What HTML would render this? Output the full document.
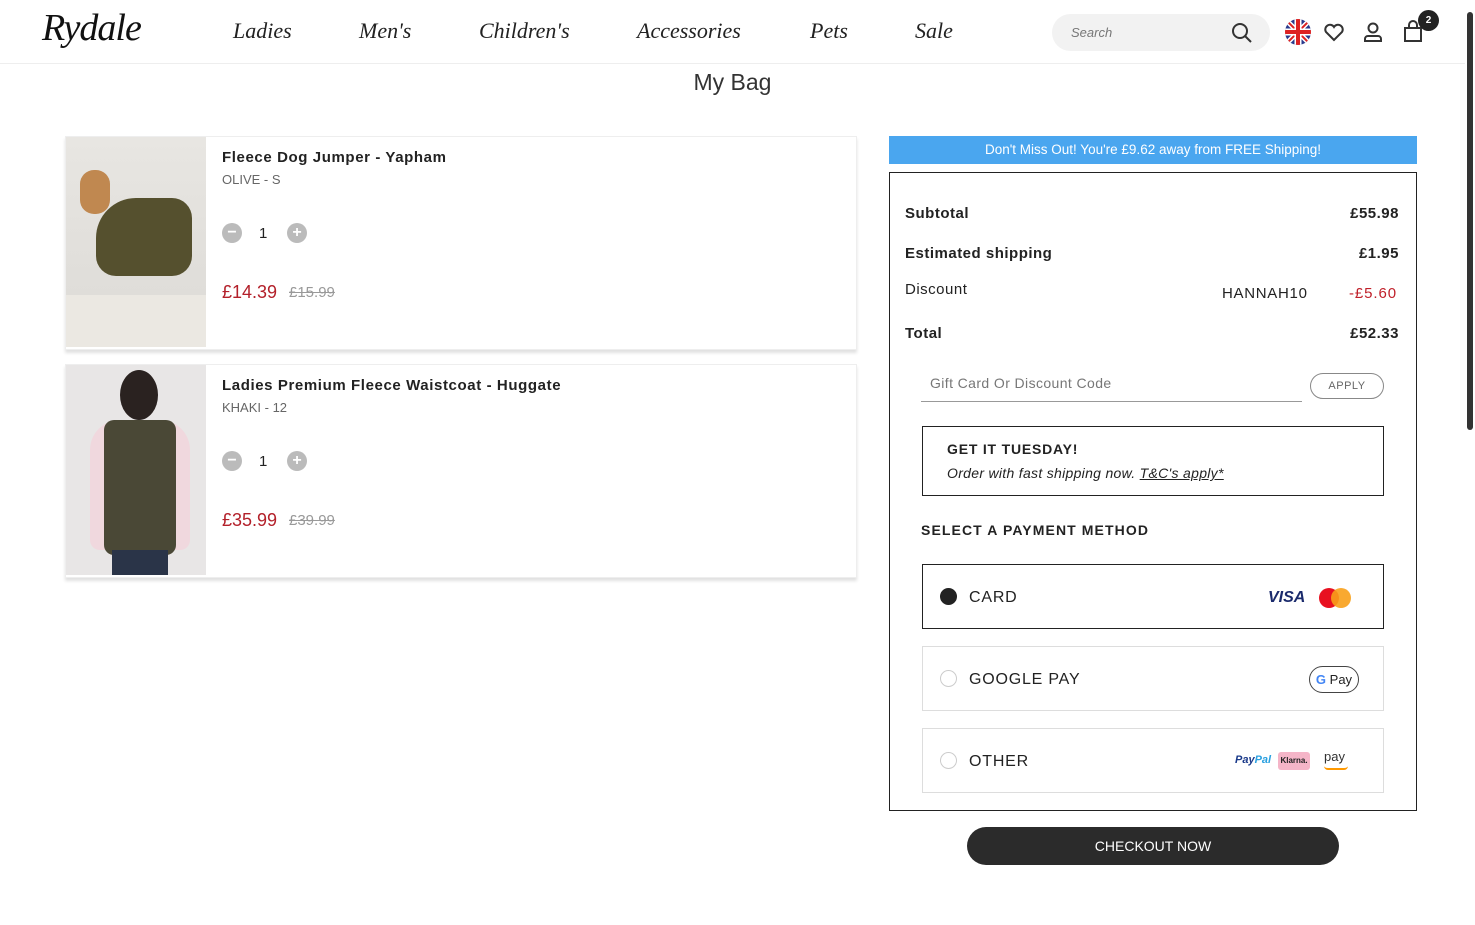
<!DOCTYPE html>
<html><head><meta charset="utf-8"><style>
*{box-sizing:border-box;margin:0;padding:0}
body{width:1475px;height:925px;overflow:hidden;background:#fff;font-family:"Liberation Sans",sans-serif;color:#222;position:relative}
.a{position:absolute}
.hdr{left:0;top:0;width:1465px;height:64px;border-bottom:1px solid #eee}
.nav{font-family:"Liberation Serif",serif;font-style:italic;font-size:22px;color:#222;top:18px}
.card{left:65px;width:792px;height:214px;border:1px solid #eee;box-shadow:0 3px 3px rgba(0,0,0,.12)}
.ttl{font-size:15px;font-weight:bold;letter-spacing:.6px;color:#222}
.sub{font-size:13px;color:#666}
.qb{width:20px;height:20px;border-radius:50%;background:#bbb;color:#fff;text-align:center;line-height:19px;font-size:16px;font-weight:bold}
.pr{font-size:18px;color:#b3202a}
.old{font-size:15px;color:#999;text-decoration:line-through}
.row{left:905px;width:494px;font-size:15px;letter-spacing:.5px}
.pay{left:922px;width:462px;height:65px;border:1px solid #ddd}
.pay span{position:absolute;left:46px;top:24px;font-size:16px;letter-spacing:.8px}
.rad{position:absolute;left:17px;top:23px;width:17px;height:17px;border-radius:50%;border:1px solid #ccc}
</style></head><body>
<div class="a hdr"></div>
<div class="a" style="left:42px;top:6px;font-family:'Liberation Serif',serif;font-style:italic;font-size:38px;letter-spacing:-1px;color:#111">Rydale</div>
<div class="a nav" style="left:233px">Ladies</div>
<div class="a nav" style="left:359px">Men's</div>
<div class="a nav" style="left:479px">Children's</div>
<div class="a nav" style="left:637px">Accessories</div>
<div class="a nav" style="left:810px">Pets</div>
<div class="a nav" style="left:915px">Sale</div>
<div class="a" style="left:1052px;top:14px;width:218px;height:37px;border-radius:19px;background:#f2f2f2"></div>
<div class="a" style="left:1071px;top:25px;font-size:13px;font-style:italic;color:#777">Search</div>
<svg class="a" style="left:1230px;top:21px" width="24" height="24" viewBox="0 0 24 24" fill="none" stroke="#333" stroke-width="2"><circle cx="10" cy="10" r="7"/><path d="M15 15l6 6"/></svg>
<svg class="a" style="left:1285px;top:19px" width="26" height="26" viewBox="0 0 26 26"><clipPath id="c"><circle cx="13" cy="13" r="13"/></clipPath><g clip-path="url(#c)"><rect width="26" height="26" fill="#2a3a8c"/><path d="M0 0L26 26M26 0L0 26" stroke="#fff" stroke-width="5"/><path d="M0 0L26 26M26 0L0 26" stroke="#d22" stroke-width="2"/><path d="M13 0V26M0 13H26" stroke="#fff" stroke-width="7"/><path d="M13 0V26M0 13H26" stroke="#d22" stroke-width="4"/></g></svg>
<svg class="a" style="left:1323px;top:22px" width="22" height="20" viewBox="0 0 22 20" fill="none" stroke="#333" stroke-width="2"><path d="M11 18L3 10a4.5 4.5 0 0 1 8-5 4.5 4.5 0 0 1 8 5z"/></svg>
<svg class="a" style="left:1363px;top:21px" width="20" height="22" viewBox="0 0 20 22" fill="none" stroke="#333" stroke-width="2"><circle cx="10" cy="7" r="4.5"/><path d="M2 20v-2a3 3 0 0 1 3-3h10a3 3 0 0 1 3 3v2z"/></svg>
<svg class="a" style="left:1403px;top:20px" width="22" height="24" viewBox="0 0 22 24" fill="none" stroke="#333" stroke-width="2"><path d="M2 8h16v13H2z"/><path d="M6 8V5a4 4 0 0 1 8 0v3"/></svg>
<div class="a" style="left:1418px;top:10px;width:21px;height:21px;border-radius:50%;background:#222;color:#fff;font-size:10px;text-align:center;line-height:21px;font-weight:bold">2</div>
<div class="a" style="left:1467px;top:12px;width:6px;height:418px;border-radius:3px;background:#333"></div>

<div class="a" style="left:0;width:1465px;top:69px;text-align:center;font-size:23px;color:#333">My Bag</div>

<div class="a card" style="top:136px"></div>
<div class="a" style="left:66px;top:137px;width:140px;height:210px;background:linear-gradient(#e8e6e2,#dcdad6)"></div>
<div class="a" style="left:66px;top:295px;width:140px;height:52px;background:#ebe8e2"></div>
<div class="a" style="left:96px;top:198px;width:96px;height:78px;border-radius:40px 20px 20px 20px;background:#55502e"></div>
<div class="a" style="left:80px;top:170px;width:30px;height:44px;border-radius:14px;background:#c08850"></div>
<div class="a ttl" style="left:222px;top:149px">Fleece Dog Jumper - Yapham</div>
<div class="a sub" style="left:222px;top:172px">OLIVE - S</div>
<div class="a qb" style="left:222px;top:223px">−</div>
<div class="a" style="left:259px;top:225px;font-size:15px">1</div>
<div class="a qb" style="left:287px;top:223px">+</div>
<div class="a pr" style="left:222px;top:282px">£14.39</div>
<div class="a old" style="left:289px;top:284px">£15.99</div>

<div class="a card" style="top:364px"></div>
<div class="a" style="left:66px;top:365px;width:140px;height:210px;background:#e8e6e6"></div>
<div class="a" style="left:90px;top:420px;width:100px;height:130px;border-radius:30px 30px 10px 10px;background:#f0d8de"></div>
<div class="a" style="left:104px;top:420px;width:72px;height:135px;border-radius:10px;background:#4a4836"></div>
<div class="a" style="left:120px;top:370px;width:38px;height:50px;border-radius:50%;background:#2a2220"></div>
<div class="a" style="left:112px;top:550px;width:56px;height:25px;background:#2a3448"></div>
<div class="a ttl" style="left:222px;top:377px">Ladies Premium Fleece Waistcoat - Huggate</div>
<div class="a sub" style="left:222px;top:400px">KHAKI - 12</div>
<div class="a qb" style="left:222px;top:451px">−</div>
<div class="a" style="left:259px;top:453px;font-size:15px">1</div>
<div class="a qb" style="left:287px;top:451px">+</div>
<div class="a pr" style="left:222px;top:510px">£35.99</div>
<div class="a old" style="left:289px;top:512px">£39.99</div>

<div class="a" style="left:889px;top:136px;width:528px;height:28px;background:#4aa6ef;color:#fff;font-size:13.5px;text-align:center;line-height:28px">Don't Miss Out! You're £9.62 away from FREE Shipping!</div>
<div class="a" style="left:889px;top:172px;width:528px;height:639px;border:1px solid #222"></div>
<div class="a row" style="top:205px;font-weight:bold">Subtotal<span style="float:right">£55.98</span></div>
<div class="a row" style="top:245px;font-weight:bold">Estimated shipping<span style="float:right">£1.95</span></div>
<div class="a row" style="top:281px">Discount</div>
<div class="a" style="left:1222px;top:285px;font-size:15px;letter-spacing:.7px">HANNAH10</div>
<div class="a" style="left:1349px;top:285px;font-size:15px;color:#c0202a;letter-spacing:.9px">-£5.60</div>
<div class="a row" style="top:325px;font-weight:bold">Total<span style="float:right">£52.33</span></div>
<div class="a" style="left:921px;top:370px;width:381px;height:32px;border-bottom:1px solid #999"></div>
<div class="a" style="left:930px;top:375px;font-size:14px;color:#777;letter-spacing:.4px">Gift Card Or Discount Code</div>
<div class="a" style="left:1310px;top:373px;width:74px;height:26px;border:1px solid #888;border-radius:13px;font-size:11px;color:#666;text-align:center;line-height:24px;letter-spacing:.5px">APPLY</div>
<div class="a" style="left:922px;top:426px;width:462px;height:70px;border:1px solid #222"></div>
<div class="a" style="left:947px;top:441px;font-size:14px;font-weight:bold;letter-spacing:.8px">GET IT TUESDAY!</div>
<div class="a" style="left:947px;top:465px;font-size:14px;font-style:italic;letter-spacing:.3px">Order with fast shipping now. <u>T&amp;C's apply*</u></div>
<div class="a" style="left:921px;top:522px;font-size:14px;font-weight:bold;letter-spacing:1.1px">SELECT A PAYMENT METHOD</div>
<div class="a pay" style="top:564px;border-color:#222"><div class="rad" style="background:#222;border-color:#222"></div><span>CARD</span>
<div class="a" style="left:345px;top:24px;font-size:16px;font-weight:bold;font-style:italic;color:#1a2a6c">VISA</div>
<div class="a" style="left:396px;top:23px;width:20px;height:20px;border-radius:50%;background:#e81020"></div>
<div class="a" style="left:408px;top:23px;width:20px;height:20px;border-radius:50%;background:rgba(248,160,26,.9)"></div></div>
<div class="a pay" style="top:646px"><div class="rad"></div><span>GOOGLE PAY</span>
<div class="a" style="left:386px;top:19px;width:50px;height:27px;border:1px solid #444;border-radius:14px;font-size:13px;text-align:center;line-height:25px"><b style="color:#4285f4">G</b> Pay</div></div>
<div class="a pay" style="top:728px"><div class="rad"></div><span>OTHER</span>
<div class="a" style="left:312px;top:25px;font-size:11px;font-weight:bold;font-style:italic;color:#1a3a8a">Pay<b style="color:#29a0e0">Pal</b></div>
<div class="a" style="left:355px;top:23px;width:32px;height:18px;background:#f5b5c8;border-radius:3px;font-size:8px;text-align:center;line-height:18px;font-weight:bold">Klarna.</div>
<div class="a" style="left:401px;top:20px;font-size:13px;color:#333">pay</div>
<div class="a" style="left:401px;top:37px;width:24px;height:4px;border-bottom:2px solid #f90;border-radius:0 0 10px 10px"></div></div>
<div class="a" style="left:967px;top:827px;width:372px;height:38px;border-radius:19px;background:#2b2b2b;color:#fff;font-size:14px;text-align:center;line-height:38px">CHECKOUT NOW</div>
</body></html>
